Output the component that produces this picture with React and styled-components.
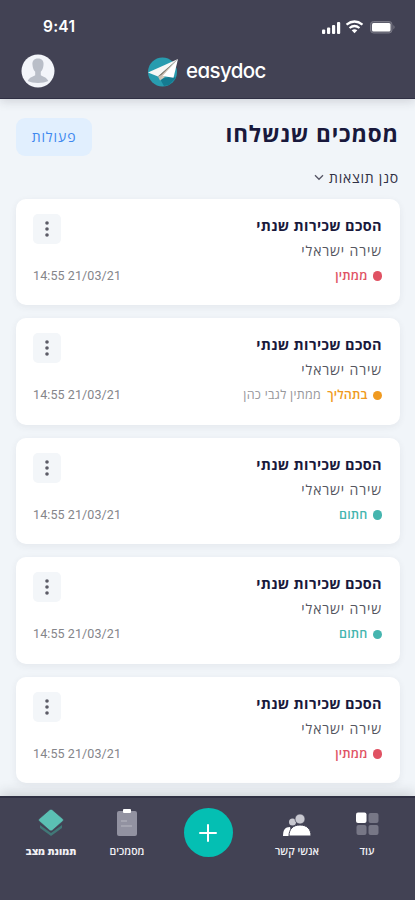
import React from "react";
import styled, { createGlobalStyle } from "styled-components";

const Global = createGlobalStyle`
  * { box-sizing: border-box; }
  body { margin: 0; background: #f1f5f9; }
  button { border: 0; padding: 0; margin: 0; font: inherit; color: inherit; }
`;
const Screen = styled.div`
  width: 415px; height: 900px; overflow: hidden;
  display: flex; flex-direction: column;
  background: #f1f5f9;
  font-family: "Open Sans", "Noto Sans", sans-serif;
`;
const Header = styled.header`
  height: 99px; flex: none; background: #424254;
  border-bottom: 1px solid #2f2f43;
  box-shadow: 0 2px 10px rgba(40, 40, 55, 0.18);
`;
const StatusBar = styled.div`
  height: 53px; padding: 0 21px 0 43px;
  display: flex; align-items: center; justify-content: space-between;
  color: #fff;
`;
const Clock = styled.span`
  font: 600 15.5px/20px Inter, sans-serif; letter-spacing: 0.25px; padding-top: 1px;
`;
const StatusIcons = styled.svg`display: block; width: 75px; height: 16px; margin-right: -2px;`;
const BrandBar = styled.div`
  height: 36px; padding: 0 21px;
  display: grid; grid-template-columns: 127px 32px 1fr; align-items: center;
`;
const Avatar = styled.svg`display: block; width: 34px; height: 34px;`;
const LogoMark = styled.svg`display: block; width: 32px; height: 32px;`;
const BrandName = styled.span`
  padding-left: 6px; color: #fff;
  font: 500 20.5px/26px Inter, sans-serif; letter-spacing: -0.6px;
  font-feature-settings: "cv11" 1;
`;
const Main = styled.main`
  flex: 1; min-height: 0; overflow: hidden;
  padding: 19px 15px 0 16px; direction: rtl;
`;
const TitleRow = styled.div`
  height: 38px; padding-right: 1px;
  display: flex; justify-content: space-between; align-items: center;
`;
const Title = styled.h1`
  margin: 0 0 7px; font-size: 22.5px; line-height: 32px; font-weight: 700;
  color: #19193c; white-space: nowrap; letter-spacing: 0.85px;
`;
const Actions = styled.button`
  width: 76px; height: 38px; border-radius: 9px; background: #e1effe;
  color: #3f88ef; font-size: 14px; line-height: 34px; letter-spacing: 0.9px;
`;
const Filter = styled.div`
  height: 43px; padding: 0 1px 0 0;
  display: flex; align-items: center; gap: 5px;
  color: #303044; font-size: 14px; line-height: 20px; letter-spacing: 0.75px;
`;
const Cards = styled.div`display: grid; gap: 13.1px;`;
const Card = styled.article`
  height: 106.4px; padding: 15px 18px 0 17px; border-radius: 10px;
  background: #fff; box-shadow: 0 2px 7px rgba(50, 60, 75, 0.07);
  display: flex; justify-content: space-between;
`;
const Info = styled.div`display: flex; flex-direction: column; align-items: flex-start;`;
const DocTitle = styled.h2`
  margin: 0; height: 25px; font-size: 14.5px; line-height: 23px; font-weight: 700;
  color: #19193c; white-space: nowrap; letter-spacing: 0.35px;
`;
const Person = styled.div`
  height: 25px; font-size: 14px; line-height: 23px; color: #56565f; white-space: nowrap;
  letter-spacing: 0.85px;
`;
const Status = styled.div`
  height: 24px; display: flex; align-items: center; gap: 5px;
  color: ${p => p.$tone}; font-size: 12.5px; line-height: 22px; font-weight: 600; white-space: nowrap;
  letter-spacing: 0.15px;
  &::before { content: ""; width: 9.5px; height: 9.5px; border-radius: 50%; background: currentColor; }
`;
const Note = styled.span`margin-right: 1px; color: #97979c; font-weight: 400; letter-spacing: 0.3px;`;
const Meta = styled.div`
  display: flex; flex-direction: column; justify-content: space-between; align-items: flex-end;
  height: 73px;
`;
const More = styled.button`
  width: 28px; height: 30px; border-radius: 5px; background: #f3f6f9;
  display: grid; place-items: center;
`;
const DateText = styled.time`
  direction: ltr; color: #85858a; font: 400 12.5px/22px Roboto, sans-serif; letter-spacing: 0.1px;
`;
const Nav = styled.nav`
  height: 104px; flex: none; background: #424254; border-top: 2px solid #303043;
  padding: 10px 22px 0 11px; position: relative;
  box-shadow: 0 -3px 12px rgba(40, 45, 55, 0.18);
  display: grid; grid-template-columns: 80px 72px 90px 88px 52px;
  align-items: start; justify-items: center;
`;
const NavItem = styled.a`
  display: flex; flex-direction: column; align-items: center; gap: 5px;
  color: #f1f1f5; font-size: ${p => (p.$active ? 10 : 10.5)}px; line-height: 16px; white-space: nowrap;
  font-weight: ${p => (p.$active ? 800 : 600)}; direction: rtl;
  svg { display: block; }
`;
const Add = styled.button`
  width: 49px; height: 49px; border-radius: 50%; background: #04bfb3;
  display: grid; place-items: center;
`;

const TONES = { wait: "#e05263", busy: "#f09a20", done: "#45b5af" };
const DOCS = [
  { label: "ממתין", tone: "wait" },
  { label: "בתהליך", tone: "busy", note: "ממתין לגבי כהן" },
  { label: "חתום", tone: "done" },
  { label: "חתום", tone: "done" },
  { label: "ממתין", tone: "wait" },
];

function DocumentCard({ doc }) {
  return (
    <Card>
      <Info>
        <DocTitle>הסכם שכירות שנתי</DocTitle>
        <Person>שירה ישראלי</Person>
        <Status $tone={TONES[doc.tone]}>
          <span>{doc.label}</span>
          {doc.note && <Note>{doc.note}</Note>}
        </Status>
      </Info>
      <Meta>
        <More>
          <svg width="6" height="18" viewBox="0 0 6 18" fill="#5c5c66">
            <circle cx="3" cy="3" r="1.800" /><circle cx="3" cy="9" r="1.800" /><circle cx="3" cy="15" r="1.800" />
          </svg>
        </More>
        <DateText>14:55 21/03/21</DateText>
      </Meta>
    </Card>
  );
}

export default function App() {
  return (
    <Screen>
      <Global />
      <Header>
        <StatusBar>
          <Clock>9:41</Clock>
          <StatusIcons viewBox="0 0 75 16" fill="#fff">
            <rect x="1" y="10.500" width="3.200" height="4.500" rx="1" />
            <rect x="6" y="8.500" width="3.200" height="6.500" rx="1" />
            <rect x="11" y="6" width="3.200" height="9" rx="1" />
            <rect x="16" y="3" width="3.200" height="12" rx="1" />
            <g fill="none" stroke="#fff" strokeWidth="2.2">
              <path d="M25.500 5.700 Q33.500 -.7 41.500 5.700" />
              <path d="M28.500 9 Q33.500 5 38.500 9" />
            </g>
            <path d="M30.700 11.200 Q33.500 9.200 36.300 11.200 L33.500 14.200Z" />
            <rect x="49.500" y="2.500" width="21.500" height="11.500" rx="3" fill="#5c5c6b" stroke="#777784" />
            <rect x="51" y="4" width="18.500" height="8.500" rx="1.500" />
            <path d="M72.500 6q2 2.200 0 4.400z" fill="#858590" />
          </StatusIcons>
        </StatusBar>
        <BrandBar>
          <Avatar viewBox="0 0 34 34">
            <circle cx="17" cy="17" r="16.500" fill="#f3f5fa" />
            <path fill="#b9bec8" d="M17 4.500c-4 0-6 2.500-5.500 6.500.2 3 1.200 5.200 2.700 6.700v3.500c-2.200 1.500-5.700 1.700-7.500 5.800 5 2.500 15.600 2.500 20.600 0-1.800-4.100-5.300-4.300-7.500-5.800v-3.500c1.500-1.500 2.500-3.700 2.700-6.700.5-4-1.500-6.500-5.500-6.500Z" />
          </Avatar>
          <LogoMark viewBox="0 0 32 32">
            <circle cx="14.500" cy="17" r="14.500" fill="#289caf" />
            <path fill="#147b91" d="M12 24l5-1 8-2 3 2-7 7-5 1Z" />
            <path fill="#f7f7f5" d="M0 17.500 30 4 10 21.500Z" />
            <path fill="#c9c0b3" d="M10 21.500 30 4 12 25.500Z" />
            <path fill="#fff" d="M30 4 25.500 22.800 14.500 21Z" />
            <path fill="#75695d" d="M10 21.500 28 5.700 13.200 20Z" />
            <path fill="#d9cdbc" d="m12 25.500 2.500-4.500 3 .6Z" />
          </LogoMark>
          <BrandName>easydoc</BrandName>
        </BrandBar>
      </Header>
      <Main>
        <TitleRow>
          <Title>מסמכים שנשלחו</Title>
          <Actions>פעולות</Actions>
        </TitleRow>
        <Filter>
          <span>סנן תוצאות</span>
          <svg width="10" height="7" viewBox="0 0 10 7" fill="none" stroke="#555565" strokeWidth="1.3">
            <path d="m1 1.300 4 4 4-4" />
          </svg>
        </Filter>
        <Cards>{DOCS.map((doc, i) => <DocumentCard key={i} doc={doc} />)}</Cards>
      </Main>
      <Nav>
        <NavItem $active>
          <svg width="28" height="30" viewBox="0 0 28 30">
            <path d="m3 17 11 8 11-8v3l-11 8-11-8Z" fill="#417878" />
            <path d="M12.800 1.700q1.200-.9 2.400 0L26 11q1 1 0 2L15.200 22.500q-1.200.9-2.400 0L2 13q-1-1 0-2Z" fill="#5bc0b4" stroke="#424254" strokeWidth=".6" />
          </svg>
          <span>תמונת מצב</span>
        </NavItem>
        <NavItem>
          <svg width="22" height="30" viewBox="0 0 22 30">
            <rect x="1" y="3" width="20" height="25" rx="2" fill="#9292a1" />
            <rect x="7" y="1" width="8" height="4" rx="1" fill="#fff" />
            <path d="M5 13h6M5 18h11" stroke="#b8b8c2" strokeWidth="1.200" />
          </svg>
          <span>מסמכים</span>
        </NavItem>
        <Add aria-label="הוספה">
          <svg width="18" height="18" viewBox="0 0 18 18" stroke="#fff" strokeWidth="2" strokeLinecap="round">
            <path d="M9 1v16M1 9h16" />
          </svg>
        </Add>
        <NavItem>
          <svg width="30" height="30" viewBox="0 0 30 30">
            <path d="M1 28c0-6 2-9 7-9l2 9Z" fill="#fff" />
            <circle cx="10.500" cy="14" r="3.500" fill="#c8c8d0" />
            <path d="M7 28c0-7 4-11 11-11s11 4 11 11Z" fill="#fff" stroke="#424254" />
            <circle cx="18" cy="11" r="5" fill="#c8c8d0" stroke="#424254" strokeWidth=".7" />
          </svg>
          <span>אנשי קשר</span>
        </NavItem>
        <NavItem>
          <svg width="24" height="30" viewBox="0 0 24 30" fill="#777786">
            <rect x="1" y="4.500" width="10.500" height="10.500" rx="2" fill="#fff" />
            <rect x="13.500" y="5" width="10" height="10" rx="2" />
            <rect x="1.500" y="17" width="10" height="10" rx="2" />
            <rect x="13.500" y="17" width="10" height="10" rx="2" />
          </svg>
          <span>עוד</span>
        </NavItem>
      </Nav>
    </Screen>
  );
}
